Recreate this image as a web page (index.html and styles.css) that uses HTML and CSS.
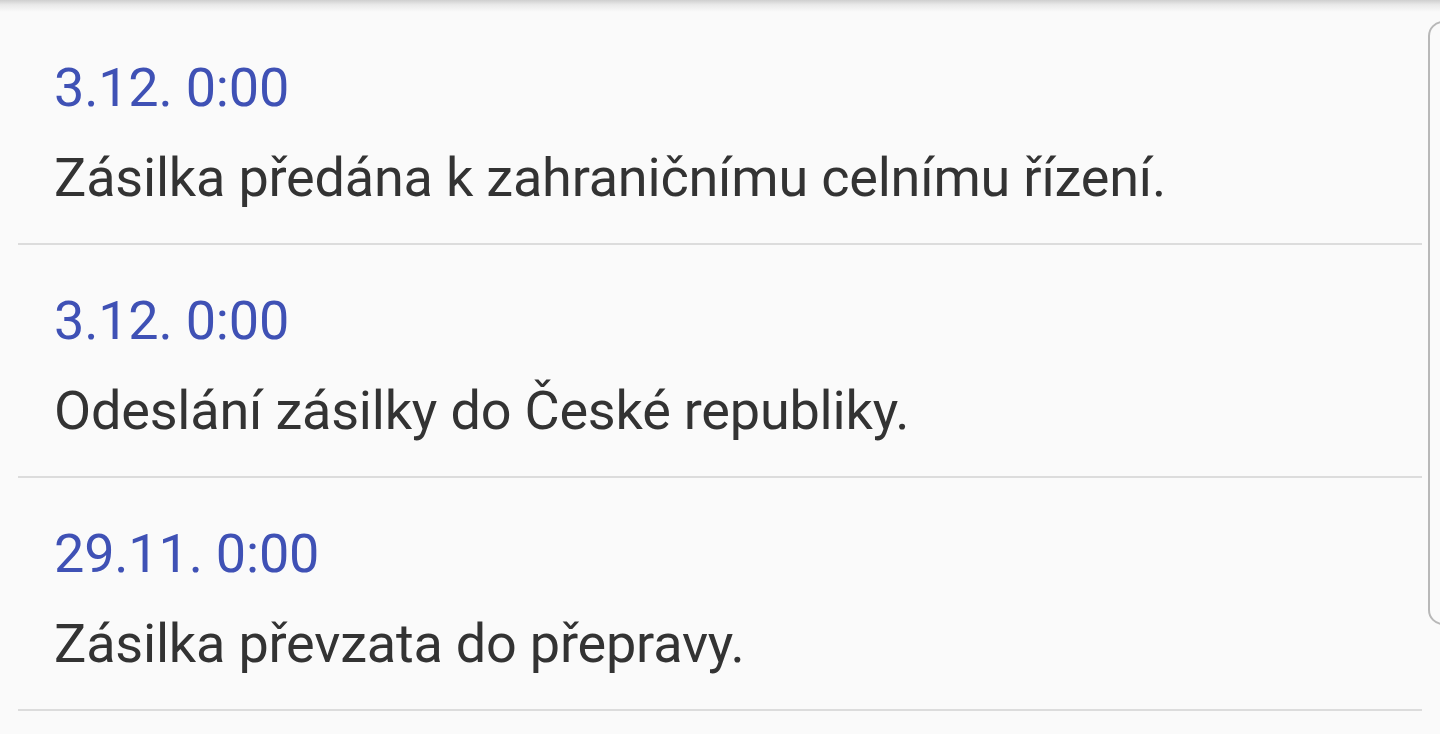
FILE: index.html
```html
<!DOCTYPE html>
<html lang="cs">
<head>
<meta charset="utf-8">
<title>Sledování zásilky</title>
<link rel="stylesheet" href="styles.css">
</head>
<body>
<div class="appbar-shadow"></div>
<ul class="events">
  <li class="event">
    <div class="date">3.12. 0:00</div>
    <div class="desc">Zásilka předána k zahraničnímu celnímu řízení.</div>
  </li>
  <li class="event">
    <div class="date">3.12. 0:00</div>
    <div class="desc">Odeslání zásilky do České republiky.</div>
  </li>
  <li class="event">
    <div class="date">29.11. 0:00</div>
    <div class="desc">Zásilka převzata do přepravy.</div>
  </li>
</ul>
<div class="scroll-indicator"></div>
</body>
</html>
```
FILE: styles.css
```css
html, body {
  margin: 0;
  padding: 0;
  background: #fafafa;
  height: 100%;
  overflow: hidden;
}
body {
  font-family: Roboto, "Noto Sans", sans-serif;
  position: relative;
}
.appbar-shadow {
  height: 12px;
  background: linear-gradient(to bottom, #cfcfcf 0%, #e9e9e9 40%, #fafafa 100%);
}
.events {
  list-style: none;
  margin: 0 18px 0 18px;
  padding: 0;
  width: 1404px;
}
.event {
  padding: 31px 0 20px 36px;
  border-bottom: 2px solid #dcdcdc;
}
.date,
.desc {
  font-size: 54px;
  line-height: 90px;
  letter-spacing: -0.2px;
}
.date {
  color: #3f51b5;
}
.desc {
  color: #333333;
}
.scroll-indicator {
  position: absolute;
  left: 1428px;
  top: 21px;
  width: 30px;
  height: 604px;
  border: 2px solid #b8b8b8;
  border-radius: 16px;
  box-sizing: border-box;
}
```
